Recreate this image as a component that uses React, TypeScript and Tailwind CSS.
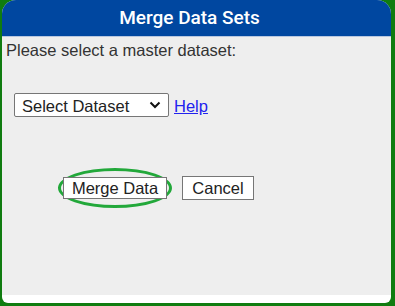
import React from 'react'

function Chevron() {
  return (
    <svg width="12" height="8" viewBox="0 0 12 8" className="pointer-events-none absolute right-[8px] top-[8px]">
      <path d="M1.5 1.5 L6 6 L10.5 1.5" fill="none" stroke="#111" strokeWidth="2" />
    </svg>
  )
}

function App() {
  return (
    <div className="h-[306px] w-[395px] bg-[#107c10] pl-[2px] pr-[4px] pb-[3px] font-['Liberation_Sans',Arial,sans-serif]">
      <div className="flex h-full flex-col overflow-hidden rounded-t-[14px] rounded-b-[6px] bg-white">
        <div className="flex h-[37px] shrink-0 items-center justify-center border-b border-[#b8c8e0] bg-[#0047a0] pr-[14px]">
          <h1 className="text-[19px] font-medium text-white font-['Roboto',sans-serif]">Merge Data Sets</h1>
        </div>
        <div className="flex h-[258px] flex-col bg-[#eeeeee]">
          <p className="pl-[4px] pt-[4px] text-[16.5px] leading-[18px] text-[#333]">Please select a master dataset:</p>
          <div className="mt-[34px] flex items-center pl-[12px]">
            <div className="relative">
              <select className="h-[24px] w-[155px] appearance-none rounded-[2px] border border-[#767676] bg-white pl-[7px] text-[16.5px] text-[#222]">
                <option>Select Dataset</option>
              </select>
              <Chevron />
            </div>
            <a href="#" className="ml-[5px] text-[16.5px] text-[#2222ee] underline">Help</a>
          </div>
          <div className="mt-[49px] flex items-center gap-[10px] pl-[56px]">
            <div className="rounded-[50%] border-[3px] border-[#22a83a] px-[2px] pt-[6px] pb-[4px]">
              <button className="h-[22px] w-[104px] border border-[#767676] bg-white text-[16.5px] leading-none text-[#222]">Merge Data</button>
            </div>
            <button className="h-[24px] w-[72px] border border-[#767676] bg-white text-[16.5px] leading-none text-[#222]">Cancel</button>
          </div>
        </div>
      </div>
    </div>
  )
}

export default App
